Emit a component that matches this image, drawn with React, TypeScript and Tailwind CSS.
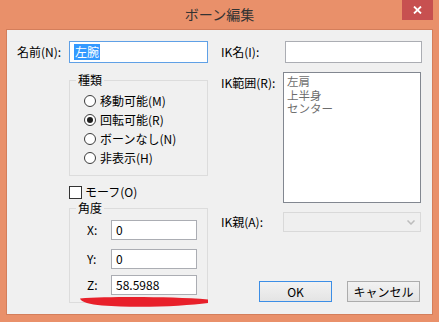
import React from "react";

const font = { fontFamily: '"Noto Sans CJK JP", "Noto Sans", sans-serif' };

const Radio: React.FC<{ label: string; checked?: boolean }> = ({ label, checked }) => (
  <div className="flex items-center h-[19px]">
    <span className="w-[12px] h-[12px] rounded-full border border-[#3c3c3c] bg-white flex items-center justify-center">
      {checked && <span className="block w-[6px] h-[6px] rounded-full bg-[#1e1e1e]" />}
    </span>
    <span className="ml-[4px] text-[12px] leading-[16px] text-black">{label}</span>
  </div>
);

const AngleRow: React.FC<{ label: string; value: string; className?: string }> = ({
  label,
  value,
  className = "",
}) => (
  <div className={`flex items-center h-[20px] ${className}`}>
    <span className="w-[24px] text-[12px] leading-[16px] text-black">{label}</span>
    <div className="w-[86px] h-[20px] bg-white border border-[#abadb3] pl-[4px] text-[12px] leading-[18px] text-black">
      {value}
    </div>
  </div>
);

export default function App() {
  return (
    <div className="relative w-[439px] h-[322px] bg-[#e9906a] flex flex-col" style={font}>
      {/* Title bar */}
      <div className="relative h-[29px] flex items-center justify-center">
        <span className="text-[14px] leading-[18px] text-[#333333] pb-[1px]">ボーン編集</span>
        <button className="absolute top-0 right-[6px] w-[31px] h-[20px] bg-[#c75050] flex items-center justify-center">
          <svg width="9" height="8" viewBox="0 0 9 8">
            <path d="M1 0.5 L8 7.5 M8 0.5 L1 7.5" stroke="white" strokeWidth="1.8" />
          </svg>
        </button>
      </div>

      {/* Client area */}
      <div className="ml-[6px] w-[427px] h-[286px] bg-[#f0f0f0] border border-[#d47e5b] flex">
        {/* Left column */}
        <div className="pl-[10px] pt-[11px] w-[214px] flex flex-col">
          <div className="flex items-center h-[22px]">
            <span className="w-[52px] text-[12px] leading-[16px] text-black">名前(N):</span>
            <div className="w-[139px] h-[22px] bg-white border border-[#5fa0e6] pl-[4px] flex items-center">
              <span className="bg-[#3399ff] text-white text-[12px] leading-[16px] px-[1px]">左腕</span>
            </div>
          </div>

          <fieldset className="ml-[52px] mt-[9px] w-[139px] h-[104px] border border-[#dcdcdc] pl-[14px]">
            <legend className="ml-[-8px] px-[2px] text-[12px] leading-[16px] text-black">種類</legend>
            <div className="mt-[3px] flex flex-col">
              <Radio label="移動可能(M)" />
              <Radio label="回転可能(R)" checked />
              <Radio label="ボーンなし(N)" />
              <Radio label="非表示(H)" />
            </div>
          </fieldset>

          <div className="ml-[52px] mt-[8px] flex items-center h-[16px]">
            <span className="w-[13px] h-[13px] bg-white border border-[#333333]" />
            <span className="ml-[3px] text-[12px] leading-[16px] text-black">モーフ(O)</span>
          </div>

          <fieldset className="ml-[52px] w-[139px] h-[103px] border border-[#dcdcdc] pl-[17px]">
            <legend className="ml-[-11px] px-[2px] text-[12px] leading-[16px] text-black">角度</legend>
            <AngleRow label="X:" value="0" className="mt-[4px]" />
            <AngleRow label="Y:" value="0" className="mt-[9px]" />
            <AngleRow label="Z:" value="58.5988" className="mt-[6px]" />
          </fieldset>
        </div>

        {/* Right column */}
        <div className="pt-[11px] w-[201px] flex flex-col">
          <div className="flex items-center h-[22px]">
            <span className="w-[64px] text-[12px] leading-[16px] text-black">IK名(I):</span>
            <div className="w-[137px] h-[22px] bg-white border border-[#abadb3]" />
          </div>

          <div className="flex mt-[9px]">
            <span className="w-[62px] mt-[3px] text-[12px] leading-[16px] text-black">IK範囲(R):</span>
            <div className="w-[138px] h-[131px] bg-white border border-[#828790] pl-[3px] pt-[2px] flex flex-col text-[11.5px] leading-[13.5px] text-[#6d6d6d]">
              <span>左肩</span>
              <span>上半身</span>
              <span>センター</span>
            </div>
          </div>

          <div className="flex items-center mt-[9px] h-[20px]">
            <span className="w-[62px] text-[12px] leading-[16px] text-black">IK親(A):</span>
            <div className="w-[138px] h-[20px] bg-[#efefef] border border-[#d9d9d9] flex items-center justify-end pr-[5px]">
              <svg width="8" height="5" viewBox="0 0 8 5">
                <path d="M0.5 0.5 L4 4 L7.5 0.5" stroke="#bcbcbc" strokeWidth="1.5" fill="none" />
              </svg>
            </div>
          </div>

          <div className="flex justify-end gap-[15px] mt-[49px] mr-[2px]">
            <button className="w-[73px] h-[21px] border border-[#3c8ee6] bg-gradient-to-b from-[#f2f2f2] to-[#e4e4e4] text-[12px] leading-[16px] text-black">
              OK
            </button>
            <button className="w-[73px] h-[21px] border border-[#acacac] bg-gradient-to-b from-[#f2f2f2] to-[#e4e4e4] text-[12px] leading-[16px] text-black">
              キャンセル
            </button>
          </div>
        </div>
      </div>

      {/* Red marker stroke drawn over the dialog */}
      <svg className="absolute left-0 top-0 pointer-events-none" width="439" height="322" viewBox="0 0 439 322">
        <path
          d="M80 298.5 C 110 296.5 170 296.5 208 299.5 L 208 303 C 185 306 140 308.5 102 305.5 C 90 304.5 81 302 80 298.5 Z"
          fill="#e8202a"
        />
      </svg>
    </div>
  );
}
